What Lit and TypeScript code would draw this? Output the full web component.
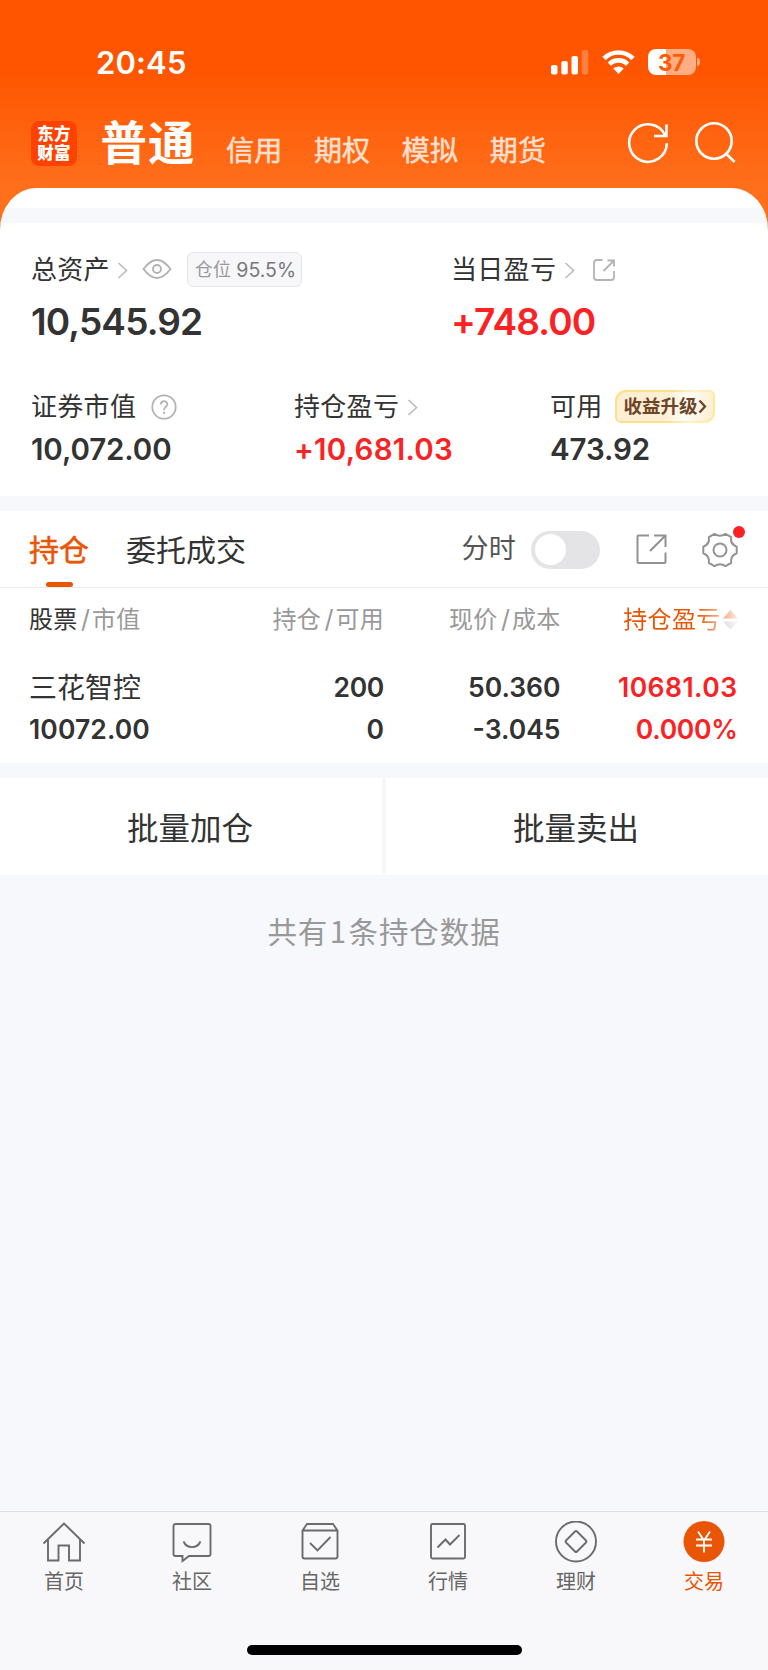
import { LitElement, html, svg, css } from "lit";
import { customElement } from "lit/decorators.js";
import { classMap } from "lit/directives/class-map.js";

const chevron = html`<svg class="chev" width="11" height="17" viewBox="0 0 11 17"><path d="M1.5 1 9.500 8.5 1.5 16" fill="none" stroke="#bdbdbd" stroke-width="1.7"/></svg>`;

const tabIcons = {
  home: svg`<path d="M1.5 22.5 22 2.5 42.500 22.500M6 18.500V39.500H16.500V24.500H27V39.500H38V18.500"/>`,
  chat: svg`<path d="M5.500 3H38.500A2 2 0 0 1 40.500 5V33A2 2 0 0 1 38.500 35H19L12.500 40V35H5.500A2 2 0 0 1 3.500 33V5A2 2 0 0 1 5.500 3ZM13.500 20.500C17 28 27 28 30.500 20.500"/>`,
  pick: svg`<path d="M4.500 9.500 9 3H35L39.500 9.500V35.500A2 2 0 0 1 37.500 37.500H6.500A2 2 0 0 1 4.500 35.500ZM4.500 9.500H39.500M12 22 19.500 29.500 32.500 16"/>`,
  chart: svg`<rect x="5" y="3" width="34" height="34.500" rx="1.500"/><path d="M11.500 26.500 19.500 18.500 24 23.500 33.500 14"/>`,
  wealth: svg`<circle cx="22" cy="20.500" r="20"/><path d="M21 10.500Q22 9.500 23 10.500L32 19.500Q33 20.500 32 21.500L23 30.500Q22 31.500 21 30.500L12 21.500Q11 20.500 12 19.500Z"/>`,
  trade: svg`<circle cx="22" cy="20.500" r="20.500" fill="#ea5504" stroke="none"/><path stroke="#fff" d="M16 10.500 22 19.500 28 10.500M22 19.500V31.500M14 18.500H30M14 24.500H30"/>`,
};

@customElement("app-root")
export class AppRoot extends LitElement {
  static styles = css`
    :host { display: block; width: 768px; height: 1670px; overflow: hidden; background: #f6f8fb; color: #333;
      font-family: Inter, "Noto Sans CJK SC", sans-serif; }
    * { box-sizing: border-box; }
    svg { display: block; flex: none; }
    .page { display: flex; flex-direction: column; height: 1670px; white-space: nowrap; }
    .top { height: 240px; flex: none; background: linear-gradient(#ff5500 0, #ff5500 70px, #ff6f1c 187px, #ff6f1c); color: #fff; }
    .status { height: 98px; padding: 26px 68px 0 96px; display: flex; align-items: center; justify-content: space-between; }
    .time { font-size: 31px; font-weight: 600; letter-spacing: .15px; }
    .sys { display: flex; align-items: center; }
    .wifi { margin: 0 13px 0 13px; }
    .battery { width: 48px; height: 26px; border-radius: 8px; display: flex; align-items: center; justify-content: center;
      background: linear-gradient(90deg, #fff 37%, #ffad82 37%); color: #ff5a05; font-size: 22.500px; font-weight: 700; letter-spacing: -.3px; }
    .nub { width: 3px; height: 8px; border-radius: 0 4px 4px 0; background: #ffad82; margin-left: 1.500px; }
    .nav { height: 90px; display: flex; align-items: center; padding: 0 32px 0 31px; }
    .logo { width: 46px; height: 45px; border-radius: 8px; background: #ff4200; display: grid; place-content: center;
      text-align: center; font-size: 16.500px; line-height: 19px; font-weight: 900; margin-top: 1px; letter-spacing: .3px; }
    .main { font-size: 46.500px; font-weight: 700; line-height: 60px; margin-left: 23.500px; letter-spacing: 1px; }
    .modes { display: flex; gap: 31.500px; margin-left: 30.500px; font-size: 28px; color: #ffe0d0; margin-top: 16px; -webkit-text-stroke: .5px #ffe0d0; line-height: 36px; letter-spacing: .2px; }
    .refresh { margin-left: auto; }
    .search { margin-left: 25px; }
    .card { margin-top: -52px; height: 308px; border-radius: 36px 36px 0 0 / 42px 42px 0 0; background: #fff; flex: none; overflow: hidden; }
    .band { height: 15px; background: #f6f8fb; flex: none; }
    .card .band { margin-top: 20px; }
    .r1 { display: grid; grid-template-columns: 420px 1fr; padding: 27px 0 0 31px; }
    .r2 { display: grid; grid-template-columns: 263px 256px 1fr; padding: 43px 0 0 31px; }
    .label { display: flex; align-items: center; height: 40px; font-size: 26px; line-height: 40px; letter-spacing: .3px; }
    .chev { margin-left: 7.500px; }
    .eye { margin: -2px 0 0 13.500px; }
    .share { margin-left: 18px; }
    .help { margin: -1px 0 0 15px; }
    .pos { margin: -1px 0 0 15px; width: 115px; height: 35px; border: 1.500px solid #e6e6ea; border-radius: 6px; background: #f7f7fa;
      font-size: 18px; color: #999; display: flex; align-items: center; justify-content: center; gap: 5px; padding: 1px 0 0 2px; }
    .pct { color: #777; font-size: 19.500px; letter-spacing: 0; }
    .big { font-size: 37px; font-weight: 600; line-height: 44px; margin-top: 10px; letter-spacing: -.85px; }
    .mid { font-size: 29.500px; font-weight: 600; line-height: 36px; margin-top: 4px; letter-spacing: -.1px; }
    .mid.red { letter-spacing: .25px; }
    .red { color: #fa2222; }
    .tag { margin: -2px 0 0 12px; width: 100px; height: 33px; border-radius: 11px 6px 11px 6px; display: flex; border: 2px solid transparent;
      align-items: center; padding-left: 7px;
      background: linear-gradient(100deg, #fdeed4 50%, #fffdf5 70%, #fdeed0) padding-box, linear-gradient(100deg, #fde08a 55%, #fff3cc 75%, #fde791) border-box;
      color: #6d4428; font-size: 18.500px; font-weight: 700; letter-spacing: 0; }
    .holdings { background: #fff; height: 252px; flex: none; }
    .tabs { height: 77px; border-bottom: 1px solid #ececee; display: flex; align-items: center; padding: 1px 29px 0; font-size: 30px; }
    .tab { height: 76px; line-height: 76px; }
    .on { color: #ea5504; -webkit-text-stroke: .5px #ea5504; display: flex; flex-direction: column; align-items: center; }
    .on::after { content: ""; width: 27px; height: 5px; border-radius: 2.500px; background: #ea5504; margin-top: -6px; flex: none; }
    .orders { margin-left: 37px; }
    .fs { margin-left: auto; font-size: 27px; line-height: 36px; color: #555; letter-spacing: .3px; margin-top: -1px; }
    .toggle { width: 69px; height: 38px; border-radius: 19px; background: #e4e4e7; padding: 3.500px; margin-left: 15px; }
    .knob { width: 31px; height: 31px; border-radius: 50%; background: #fff; }
    .open { margin-left: 36px; }
    .gear { margin: 0 1px 0 35px; position: relative; }
    .dot { position: absolute; width: 12px; height: 12px; border-radius: 50%; background: #fa2222; right: -7px; top: -6px; }
    .grid { display: grid; grid-template-columns: 195px 160px 176.500px 177px; padding: 0 30px 0 29px; }
    .cell { text-align: right; }
    .cell:first-child { text-align: left; }
    .head { font-size: 24px; line-height: 63px; height: 63px; color: #999; letter-spacing: .3px; }
    .sl { margin: 0 1.500px 0 3.500px; font-size: 25px; }
    .dark { color: #333; }
    .sort { display: flex; align-items: center; justify-content: flex-end; color: #ea5504; gap: 2px; }
    .sorttext { background: linear-gradient(90deg, #ea5504 75%, #f5b491); -webkit-background-clip: text; color: transparent; }
    .num { font-size: 26.500px; font-weight: 600; line-height: 41px; letter-spacing: 0; }
    .second { line-height: 40px; }
    .second .cell:first-child { letter-spacing: .1px; }
    .wide { letter-spacing: .45px; }
    .tight { letter-spacing: -.3px; }
    .rows { padding-top: 16px; }
    .name { font-size: 28px; font-weight: 400; line-height: 42px; }
    .batch { display: grid; grid-template-columns: 1fr 1fr; gap: 4px; height: 97px; flex: none; }
    .btn { background: #fff; display: flex; align-items: center; justify-content: center; font-size: 31.500px; padding: 0 2px 2px 0; }
    .note { text-align: center; color: #999; font-size: 29.500px; line-height: 40px; margin-top: 35px; letter-spacing: .9px; font-family: "Noto Sans CJK SC", sans-serif; }
    .count { margin: 0 1.500px; }
    .bottom { margin-top: auto; height: 159px; border-top: 1px solid #dfe0e3; background: #f8f8fa; }
    .items { display: grid; grid-template-columns: repeat(6, 1fr); padding-top: 9px; }
    .item { display: flex; flex-direction: column; align-items: center; font-size: 20px; line-height: 28px; color: #666; gap: 5px; }
    .active { color: #ea5504; }
    .homebar { width: 275px; height: 10px; border-radius: 5px; background: #000; margin: 49px auto 0; }
  `;

  private items = [
    ["home", "首页"], ["chat", "社区"], ["pick", "自选"], ["chart", "行情"], ["wealth", "理财"], ["trade", "交易"],
  ] as const;

  render() {
    return html`<div class="page">
      <header class="top">
        <div class="status">
          <span class="time">20:45</span>
          <div class="sys">
            <svg width="38" height="25" viewBox="0 0 38 25" fill="#fff"><rect y="15" width="6.500" height="9.500" rx="2"/><rect x="10.300" y="11" width="6.500" height="13.500" rx="2"/><rect x="20.500" y="6" width="6.500" height="18.500" rx="2"/><rect x="30.800" width="6.500" height="24.500" rx="2" opacity=".25"/></svg>
            <svg class="wifi" width="33" height="25" viewBox="0 0 33 25"><g fill="none" stroke="#fff" stroke-width="4.600"><path d="M2 8.500A20.500 20.500 0 0 1 31 8.500"/><path d="M7.300 14.200A13 13 0 0 1 25.700 14.200"/></g><path d="M11.300 18.500A7.500 7.500 0 0 1 21.700 18.500L16.500 24Z" fill="#fff"/></svg>
            <span class="battery">37</span><span class="nub"></span>
          </div>
        </div>
        <nav class="nav">
          <div class="logo"><span>东方</span><span>财富</span></div>
          <div class="main">普通</div>
          <div class="modes">${["信用", "期权", "模拟", "期货"].map((m) => html`<span>${m}</span>`)}</div>
          <svg class="refresh" width="42" height="42" viewBox="0 0 42 42" fill="none" stroke="#fff" stroke-width="2.600"><path d="M39.800 21.300A18.800 18.800 0 1 1 38 13M39.500 2.500V14H27"/></svg>
          <svg class="search" width="42" height="42" viewBox="0 0 42 42" fill="none" stroke="#fff" stroke-width="2.600"><circle cx="20" cy="19" r="17.700"/><path d="M32 31.500 40.500 40"/></svg>
        </nav>
      </header>
      <section class="card">
        <div class="band"></div>
        <div class="r1">
          <div>
            <div class="label">总资产${chevron}
              <svg class="eye" width="30" height="20" viewBox="0 0 30 20" fill="none" stroke="#b3b3b3" stroke-width="1.900"><path d="M1.500 10Q15-8 28.500 10Q15 28 1.500 10Z"/><circle cx="15" cy="10" r="4"/></svg>
              <span class="pos"><span>仓位</span><span class="pct">95.5%</span></span>
            </div>
            <div class="big">10,545.92</div>
          </div>
          <div>
            <div class="label">当日盈亏${chevron}
              <svg class="share" width="22" height="22" viewBox="0 0 22 22" fill="none" stroke="#b3b3b3" stroke-width="1.800"><path d="M9.500 1H4A3 3 0 0 0 1 4V18A3 3 0 0 0 4 21H18A3 3 0 0 0 21 18V12M14.500 1.500H21V7.500M20.500 2 10.500 12"/></svg>
            </div>
            <div class="big red">+748.00</div>
          </div>
        </div>
        <div class="r2">
          <div>
            <div class="label">证券市值
              <svg class="help" width="26" height="26" viewBox="0 0 26 26" fill="none" stroke="#b3b3b3" stroke-width="1.800"><circle cx="13" cy="13" r="11.700"/><path d="M9.800 10.500C9.800 6 16.300 6 16.300 10.300C16.300 12.800 13 12.800 13 16.200"/><path d="M13 17.800V20"/></svg>
            </div>
            <div class="mid">10,072.00</div>
          </div>
          <div><div class="label">持仓盈亏${chevron}</div><div class="mid red">+10,681.03</div></div>
          <div>
            <div class="label">可用<span class="tag">收益升级<svg width="9" height="15" viewBox="0 0 9 15"><path d="M1.500 1.500 7 7.500 1.500 13.500" fill="none" stroke="#6d4428" stroke-width="2.300"/></svg></span></div>
            <div class="mid">473.92</div>
          </div>
        </div>
      </section>
      <div class="band"></div>
      <section class="holdings">
        <div class="tabs">
          <span class="tab on">持仓</span><span class="tab orders">委托成交</span>
          <span class="fs">分时</span><span class="toggle"><div class="knob"></div></span>
          <svg class="open" width="31" height="31" viewBox="0 0 31 31" fill="none" stroke="#929292" stroke-width="2"><path d="M13 1.500H2.500Q1.500 1.500 1.500 2.500V28Q1.500 29 2.500 29H28.500Q29.500 29 29.500 28V18.500M18 1.500H29.500V13M29 2 14 17"/></svg>
          <div class="gear">
            <svg width="36" height="36" viewBox="-18 -18 36 36" fill="none" stroke="#929292" stroke-width="2" stroke-linejoin="round"><circle r="6.500"/><path d="M16.700-3.200V3.200Q10 5.750 11.200 12.800L5.500 16.100Q0 12.500-5.500 16.100L-11.200 12.800Q-10 5.750-16.700 3.200V-3.200Q-10-5.750-11.200-12.800L-5.500-16.100Q0-12.500 5.500-16.100L11.200-12.800Q10-5.750 16.700-3.200Z"/></svg>
            <i class="dot"></i>
          </div>
        </div>
        <div class="grid head">
          <div class="cell"><span class="dark">股票</span><span class="sl">/</span>市值</div>
          <div class="cell">持仓<span class="sl">/</span>可用</div>
          <div class="cell">现价<span class="sl">/</span>成本</div>
          <div class="cell sort"><span class="sorttext">持仓盈亏</span>
            <svg width="15" height="20" viewBox="0 0 15 20">
              <defs>
                <linearGradient id="up"><stop stop-color="#f3ab83"/><stop offset="1" stop-color="#fdf0e8"/></linearGradient>
                <linearGradient id="down"><stop stop-color="#dedede"/><stop offset="1" stop-color="#fafafa"/></linearGradient>
              </defs>
              <path d="M0 8.500 7.500 0 15 8.500Z" fill="url(#up)"/><path d="M0 11.500 7.500 20 15 11.500Z" fill="url(#down)"/></svg></div>
        </div>
        <div class="rows">
          <div class="grid num">
            <div class="cell name">三花智控</div><div class="cell tight">200</div><div class="cell">50.360</div><div class="cell red wide">10681.03</div>
          </div>
          <div class="grid num second">
            <div class="cell">10072.00</div><div class="cell">0</div><div class="cell">-3.045</div><div class="cell red tight">0.000%</div>
          </div>
        </div>
      </section>
      <div class="band"></div>
      <div class="batch"><div class="btn"><span>批量加仓</span></div><div class="btn"><span>批量卖出</span></div></div>
      <div class="note">共有<span class="count">1</span>条持仓数据</div>
      <footer class="bottom">
        <div class="items">
          ${this.items.map(([icon, label]) => html`<div class=${classMap({ item: true, active: icon === "trade" })}>
            <svg width="44" height="42" viewBox="0 0 44 42" fill="none" stroke="#6b6b6b" stroke-width="1.900">${tabIcons[icon]}</svg>
            <span>${label}</span></div>`)}
        </div>
        <div class="homebar"></div>
      </footer>
    </div>`;
  }
}
